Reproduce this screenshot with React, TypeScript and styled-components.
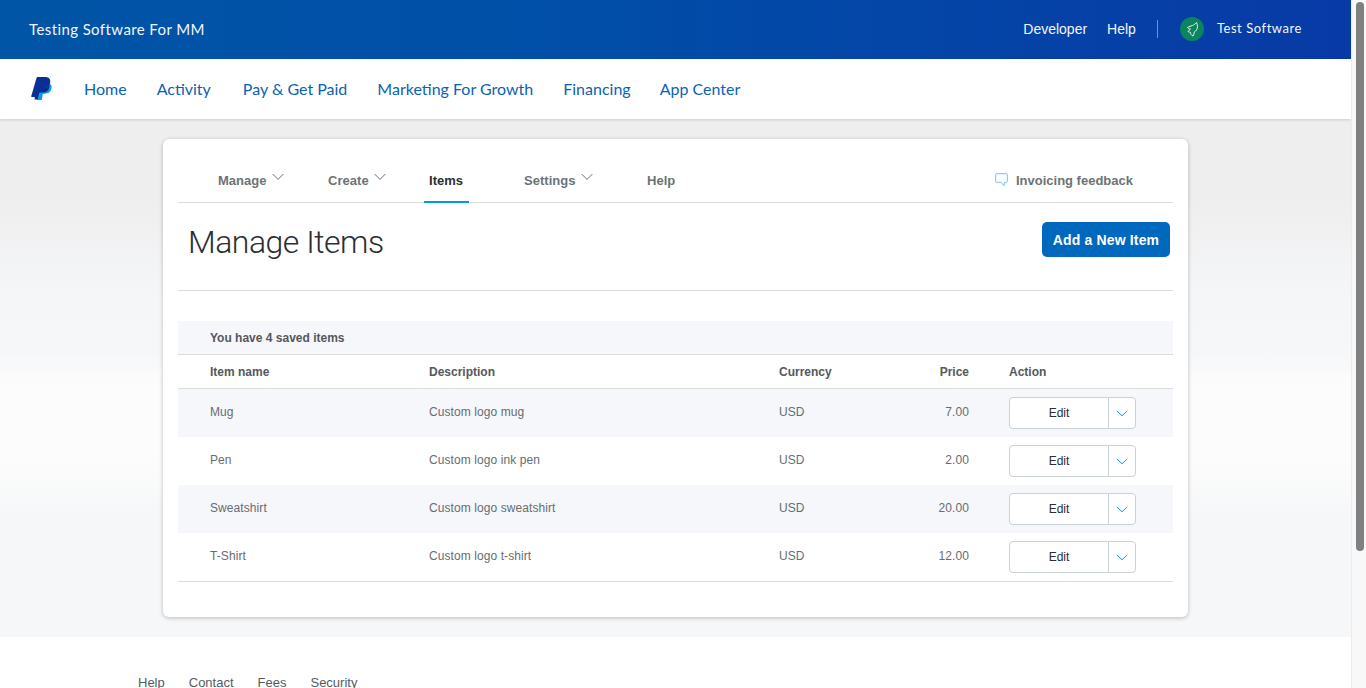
import React from "react";
import styled, { createGlobalStyle } from "styled-components";

const Global = createGlobalStyle`
  html { background: #fff; }
  body { margin: 0 15px 0 0; background: #fff; font-family: "Liberation Sans", Arial, sans-serif; color: #2c2e2f; }
  * { box-sizing: border-box; }
`;

const ScrollTrack = styled.div`
  position: fixed;
  top: 0;
  right: 0;
  bottom: 0;
  width: 15px;
  padding: 2px 2px 0 4px;
  background: #f8f8f8;
  border-left: 1px solid #ececec;
`;
const ScrollThumb = styled.div`
  height: 549px;
  background: #808080;
  border-radius: 5px;
`;
const TopBar = styled.header`
  height: 59px;
  display: flex;
  align-items: center;
  justify-content: space-between;
  padding: 0 49px 2px 29px;
  background: linear-gradient(90deg, #0055a6 0%, #004fa8 40%, #083aa6 100%);
  color: #f2f6fb;
`;
const Merchant = styled.div`
  font-family: Lato, "Noto Sans", sans-serif;
  font-size: 15px;
  letter-spacing: 0.4px;
`;
const TopRight = styled.div`
  display: flex;
  align-items: center;
`;
const TopLink = styled.a`
  font-size: 14px;
  margin-right: 20px;
  &:last-of-type { margin-right: 21px; }
`;
const Divider = styled.span`
  width: 1px;
  height: 18px;
  background: #6f93cc;
  margin-right: 22px;
`;
const UserName = styled.span`
  font-family: Lato, "Noto Sans", sans-serif;
  font-size: 13px;
  letter-spacing: 0.55px;
  margin: -2px 0 0 13px;
`;
const NavBar = styled.nav`
  height: 60px;
  display: flex;
  align-items: center;
  padding: 0 0 0 31px;
  background: #fff;
  position: relative;
  box-shadow: 0 1px 3px rgba(0, 0, 0, 0.14);
`;
const NavLinks = styled.div`
  display: flex;
  margin: -2px 0 0 32px;
  gap: 30px;
`;
const NavLink = styled.a`
  font-family: Lato, "Noto Sans", sans-serif;
  font-size: 16px;
  color: #0a62b4;
  &:nth-child(2) { margin-right: 2px; }
  &:nth-child(5) { margin-right: -1px; }
`;
const Stage = styled.main`
  height: 518px;
  padding: 20px 0 0 163px;
  background: linear-gradient(
    180deg,
    #eeeeee 0%,
    #eeeeee 15%,
    #f5f6f8 34%,
    #f6f7f9 45%,
    #fcfcfc 51%,
    #fcfcfc 66%,
    #f6f7f9 77%,
    #f6f7f9 100%
  );
`;
const Card = styled.section`
  width: 1025px;
  height: 478px;
  padding: 0 15px;
  background: #fff;
  border-radius: 6px;
  box-shadow: 0 1px 4px rgba(0, 0, 0, 0.25);
`;
const Tabs = styled.div`
  height: 64px;
  display: flex;
  align-items: stretch;
  border-bottom: 1px solid #d9dbdd;
  padding-left: 40px;
  position: relative;
`;
const Tab = styled.a<{ $active?: boolean; $w: number }>`
  width: ${(p) => p.$w}px;
  display: flex;
  align-items: flex-start;
  padding-top: 34px;
  font-size: 13px;
  font-weight: 700;
  letter-spacing: 0.03px;
  color: ${(p) => (p.$active ? "#2c2e2f" : "#6c7378")};
  position: relative;
`;
const ActiveTab = styled(Tab)`
  &::after {
    content: "";
    position: absolute;
    left: -5px;
    bottom: -1px;
    width: 45px;
    height: 2px;
    background: #009cde;
  }
`;
const Feedback = styled.a`
  position: absolute;
  right: 40px;
  top: 34px;
  display: flex;
  align-items: center;
  font-size: 13px;
  font-weight: 700;
  color: #6c7378;
`;
const FeedbackGlyph = styled.svg`
  margin: -1px 8px 0 0;
`;
const TitleRow = styled.div`
  height: 88px;
  display: flex;
  align-items: flex-start;
  justify-content: space-between;
  padding: 0 3px 0 10px;
  border-bottom: 1px solid #d9dbdd;
`;
const Title = styled.h1`
  margin: 21px 0 0;
  font-family: Roboto, sans-serif;
  font-size: 32px;
  line-height: 36px;
  font-weight: 300;
  letter-spacing: -0.5px;
  color: #2c2e2f;
`;
const PrimaryButton = styled.button`
  width: 128px;
  height: 35px;
  margin-top: 19px;
  border: 0;
  border-radius: 5px;
  background: #0068bd;
  color: #fff;
  font-family: "Liberation Sans", sans-serif;
  font-size: 14px;
  font-weight: 700;
  letter-spacing: 0.15px;
`;
const Band = styled.div`
  margin-top: 30px;
  height: 34px;
  padding: 0 0 0 32px;
  display: flex;
  align-items: center;
  background: #f5f7fa;
  border-bottom: 1px solid #d9dbdd;
  font-size: 12px;
  font-weight: 700;
  color: #55585b;
`;
const Row = styled.div<{ $striped?: boolean }>`
  display: grid;
  grid-template-columns: 219px 350px 100px 90px 1fr;
  align-items: center;
  padding-left: 32px;
  height: 48px;
  background: ${(p) => (p.$striped ? "#f5f7fa" : "#fff")};
  font-size: 12px;
  letter-spacing: 0.08px;
  color: #686c70;
`;
const HeadRow = styled(Row)`
  height: 34px;
  font-weight: 700;
  letter-spacing: 0;
  color: #55585b;
  border-bottom: 1px solid #d9dbdd;
`;
const TextCell = styled.div`
  margin-top: -2px;
`;
const PriceCell = styled(TextCell)`
  text-align: right;
`;
const ActionCell = styled.div`
  padding-left: 40px;
`;
const HeadPrice = styled.div`
  text-align: right;
`;
const ActionGroup = styled.div`
  display: flex;
  width: 127px;
  height: 32px;
  background: #fff;
  border: 1px solid #cbd2d6;
  border-radius: 4px;
`;
const EditButton = styled.button`
  width: 99px;
  border: 0;
  border-right: 1px solid #cbd2d6;
  background: transparent;
  color: #2c2e2f;
  font-family: "Liberation Sans", sans-serif;
  font-size: 12px;
`;
const CaretButton = styled.button`
  flex: 1;
  border: 0;
  padding: 0;
  background: transparent;
  display: flex;
  align-items: center;
  justify-content: center;
`;
const TableEnd = styled.div`
  border-top: 1px solid #d9dbdd;
`;
const Footer = styled.footer`
  height: 220px;
  padding: 38px 0 0 138px;
  display: flex;
  gap: 24px;
  background: #fff;
`;
const FootLink = styled.a`
  font-size: 13px;
  line-height: 15px;
  color: #545b60;
`;
const TabChevron = styled.svg`
  margin: 0 0 0 5px;
`;

const Chevron = () => (
  <TabChevron width="12" height="8" viewBox="0 0 13 8" fill="none" stroke="#5d6369" strokeWidth="1">
    <path d="M.7.8l5.8 5.8L12.3.8" />
  </TabChevron>
);

const Logo = () => (
  <svg width="21" height="24" viewBox="0 0 21 24">
    <path fill="#0a9be5" d="M18.3 6.2c1.8 1 2.7 2.7 2.2 5.1-.8 3.8-3.3 5.4-7 5.4h-1c-.4 0-.7.3-.8.7l-.8 5c-.1.4-.4.6-.8.6H6.3c-.4 0-.6-.3-.5-.7L8 9z" />
    <path fill="#0a2a8f" d="M6.2 6.6h7.6c2 0 3.6.6 4.5 1.6.6 3.9-2 7.4-6.6 7.4H9c-.5 0-.9.3-1 .8l-1.5 6.2H3.5L5.5 8z" />
    <path fill="#0a3097" d="M6.6 0h7.5c3.8 0 5.7 2.2 5.1 5.3-.7 4.7-3.6 7.3-7.7 7.3H8.2c-.5 0-.9.3-1 .8l-1.2 6c-.1.4-.4.6-.8.6H.8c-.4 0-.7-.3-.6-.7L5.6.8C5.7.3 6.1 0 6.6 0z" />
  </svg>
);

const Avatar = () => (
  <svg width="24" height="24" viewBox="0 0 24 24">
    <circle cx="12" cy="12" r="12" fill="#0a8560" />
    <path
      fill="none"
      stroke="#e8f5f0"
      strokeWidth="1"
      d="M16.5 5.5C15.5 7 14 7.5 12.5 8.5 11 9 9 9.5 7.5 10.5 8 11.5 9 12 10.5 12 9.5 13 8.5 13.5 8 14.5 9 15 10 15.5 10.5 15.5 10.5 17 11.5 18.5 13 19 14 18 14 16.5 14 15.5 16 14 17.5 12 17.5 9.5 17.5 8 17 6.5 16.5 5.5z"
    />
  </svg>
);

const FeedbackIcon = () => (
  <FeedbackGlyph width="13" height="14" viewBox="0 0 13 14" fill="none" stroke="#79bdec" strokeWidth="1">
    <path d="M1.5.7h10c.5 0 .8.3.8.8v7c0 .5-.3.8-.8.8H9.4l-.4 3.4-2.9-3.4H1.5c-.5 0-.8-.3-.8-.8v-7c0-.5.3-.8.8-.8z" />
  </FeedbackGlyph>
);

const items = [
  ["Mug", "Custom logo mug", "7.00"],
  ["Pen", "Custom logo ink pen", "2.00"],
  ["Sweatshirt", "Custom logo sweatshirt", "20.00"],
  ["T-Shirt", "Custom logo t-shirt", "12.00"],
];

export default function App() {
  return (
    <>
      <Global />
      <ScrollTrack>
        <ScrollThumb />
      </ScrollTrack>
      <TopBar>
        <Merchant>Testing Software For MM</Merchant>
        <TopRight>
          <TopLink>Developer</TopLink>
          <TopLink>Help</TopLink>
          <Divider />
          <Avatar />
          <UserName>Test Software</UserName>
        </TopRight>
      </TopBar>
      <NavBar>
        <Logo />
        <NavLinks>
          <NavLink>Home</NavLink>
          <NavLink>Activity</NavLink>
          <NavLink>Pay &amp; Get Paid</NavLink>
          <NavLink>Marketing For Growth</NavLink>
          <NavLink>Financing</NavLink>
          <NavLink>App Center</NavLink>
        </NavLinks>
      </NavBar>
      <Stage>
        <Card>
          <Tabs>
            <Tab $w={110}>Manage<Chevron /></Tab>
            <Tab $w={101}>Create<Chevron /></Tab>
            <ActiveTab $active $w={95}>Items</ActiveTab>
            <Tab $w={123}>Settings<Chevron /></Tab>
            <Tab $w={60}>Help</Tab>
            <Feedback><FeedbackIcon />Invoicing feedback</Feedback>
          </Tabs>
          <TitleRow>
            <Title>Manage Items</Title>
            <PrimaryButton>Add a New Item</PrimaryButton>
          </TitleRow>
          <Band>You have 4 saved items</Band>
          <HeadRow>
            <div>Item name</div>
            <div>Description</div>
            <div>Currency</div>
            <HeadPrice>Price</HeadPrice>
            <ActionCell>Action</ActionCell>
          </HeadRow>
          {items.map(([name, desc, price], i) => (
            <Row key={name} $striped={i % 2 === 0}>
              <TextCell>{name}</TextCell>
              <TextCell>{desc}</TextCell>
              <TextCell>USD</TextCell>
              <PriceCell>{price}</PriceCell>
              <ActionCell>
                <ActionGroup>
                  <EditButton>Edit</EditButton>
                  <CaretButton>
                    <svg width="12" height="7" viewBox="0 0 12 7" fill="none" stroke="#1a9ae0" strokeWidth="1">
                      <path d="M.7.8L6 5.8 11.3.8" />
                    </svg>
                  </CaretButton>
                </ActionGroup>
              </ActionCell>
            </Row>
          ))}
          <TableEnd />
        </Card>
      </Stage>
      <Footer>
        <FootLink>Help</FootLink>
        <FootLink>Contact</FootLink>
        <FootLink>Fees</FootLink>
        <FootLink>Security</FootLink>
      </Footer>
    </>
  );
}
